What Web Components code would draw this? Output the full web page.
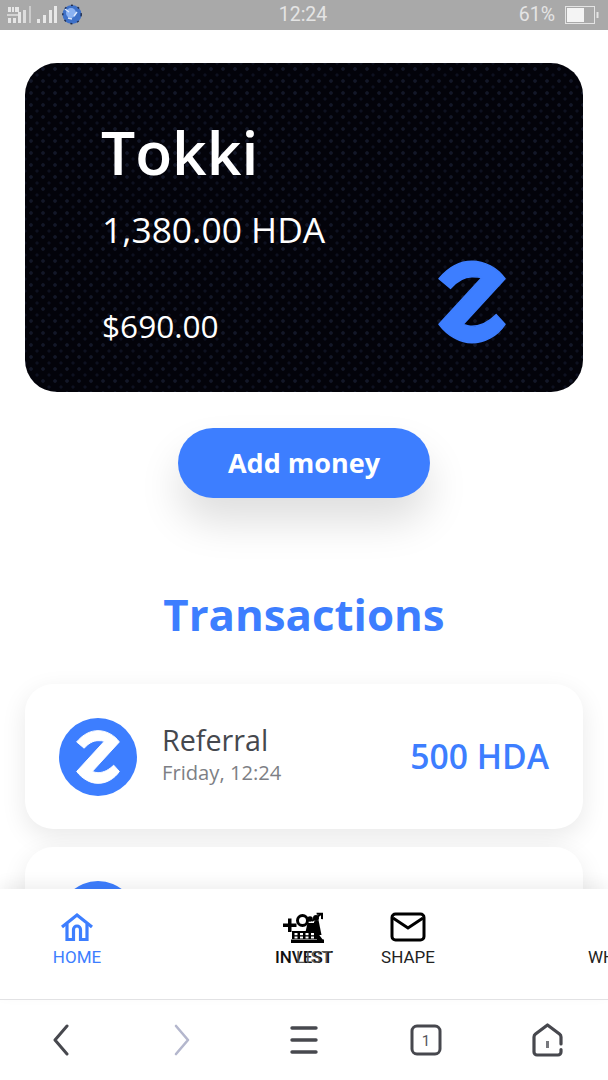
<!DOCTYPE html>
<html><head><meta charset="utf-8"><title>Tokki</title>
<style>
html,body{margin:0;padding:0;background:#fff}
body{width:608px;height:1080px;display:flex;flex-direction:column;overflow:hidden;font-family:"Open Sans",sans-serif}
main-view{flex:1;min-height:0}
</style></head><body>
<status-bar></status-bar>
<main-view>
  <balance-card name="Tokki" amount="1,380.00 HDA" fiat="$690.00"></balance-card>
  <pill-button>Add money</pill-button>
  <section-title>Transactions</section-title>
  <tx-row title="Referral" when="Friday, 12:24" amount="500 HDA"></tx-row>
  <tx-row></tx-row>
</main-view>
<tab-bar></tab-bar>
<browser-bar></browser-bar>
<script>
const Z='M0 18C10 6 22 0 34 0C47 0 60 7 68 18L25 65C28 66 31 67 34 67C43 67 52 62 59 55L68 65C60 77 47 84 34 84C22 84 9 77 0 65L44 17C41 16 38 16 34 16C26 16 18 21 12 28Z';
function def(name,css,html){
  customElements.define(name,class extends HTMLElement{
    connectedCallback(){
      if(this.shadowRoot)return;
      const r=this.attachShadow({mode:'open'});
      const a=k=>this.getAttribute(k)||'';
      r.innerHTML='<style>'+css+'</style>'+(typeof html==='function'?html(a):html);
    }
  });
}
def('z-logo',':host{display:block;line-height:0;color:inherit}svg{display:block;width:100%;height:100%}',
  `<svg viewBox="-1 -1 70 86"><path fill="currentColor" stroke="currentColor" stroke-width="1.5" stroke-linejoin="round" d="${Z}"/></svg>`);

def('status-bar',`:host{display:flex;align-items:center;height:30px;background:#a9a9a9;color:#e4e4e4;font:19.5px/30px Roboto,sans-serif;box-sizing:border-box;padding:0 9px 0 7px;flex:none}
  .l{flex:1;display:flex;align-items:center}.t{flex:none}.r{flex:1;display:flex;justify-content:flex-end;align-items:center;gap:10px}`,
`<div class="l"><svg width="76" height="22" viewBox="0 0 76 22">
  <g fill="#e6e6e6"><rect x="1" y="3" width="3" height="5"/><rect x="5" y="3" width="2" height="5"/><rect x="8" y="3" width="4" height="5"/>
  <rect x="0" y="10" width="11" height="2" opacity=".7"/><rect x="1" y="14" width="3" height="5"/><rect x="6" y="14" width="3" height="5"/><rect x="11" y="8" width="3" height="11" /><rect x="16" y="6" width="3" height="13" opacity=".85"/></g>
  <rect x="22" y="2" width="2" height="17" fill="#dcdcdc" opacity=".7"/>
  <g fill="#e8e8e8"><rect x="30" y="15" width="3" height="4"/><rect x="36" y="11" width="3" height="8"/><rect x="42" y="6" width="3" height="13"/><rect x="47" y="2" width="3" height="17"/></g>
  <circle cx="65" cy="10.5" r="9.5" fill="#3f71c8"/><circle cx="64" cy="9" r="5" fill="#8bb2f2"/><path d="M58 5l4 3M70 8l-3 4M61 14l4 1" stroke="#dce8fb" stroke-width="1.4" fill="none"/><circle cx="65" cy="10.5" r="9.2" fill="none" stroke="#1f2c4c" stroke-width="1.4" stroke-dasharray="2 5"/>
</svg></div>
<div class="t">12:24</div>
<div class="r"><span>61%</span><svg width="34" height="18" viewBox="0 0 34 18"><rect x=".5" y=".5" width="29" height="17" fill="none" stroke="#e4e4e4"/><rect x="2" y="2" width="17" height="14" fill="#f4f4f4"/><rect x="31.5" y="6" width="2" height="6" fill="#e4e4e4"/></svg></div>`);

def('main-view',`:host{display:block;overflow:hidden;padding:33px 25px 0;box-sizing:border-box}`,'<slot></slot>');

def('balance-card',`:host{display:flex;justify-content:space-between;height:329px;border-radius:32px;color:#fff;box-sizing:border-box;padding:53px 77px 48px;
  background-color:#03030a;background-image:radial-gradient(circle,#131728 0 1.4px,transparent 2.2px),radial-gradient(circle,#0e1120 0 1.2px,transparent 2px);background-size:12px 12px;background-position:0 0,6px 6px}
  .n{font-size:60.5px;font-weight:600;line-height:72px;margin-left:-1px}
  .a{font-size:35.4px;line-height:44px;margin-top:19px}
  .f{font-size:31.6px;line-height:44px;margin-top:53px}
  z-logo{align-self:flex-end;width:68px;height:84px;color:#3d7eff}`,
a=>`<div><div class="n">${a('name')}</div><div class="a">${a('amount')}</div><div class="f">${a('fiat')}</div></div><z-logo></z-logo>`);

def('pill-button',`:host{display:block;width:252px;height:70px;margin:36px auto 0;border-radius:35px;background:#3d7eff;color:#fff;font-size:27px;font-weight:700;line-height:70px;text-align:center;box-shadow:0 24px 40px rgba(0,0,0,.13)}`,'<slot></slot>');

def('section-title',`:host{display:block;text-align:center;color:#3d7eff;font-size:43.8px;font-weight:700;line-height:56px;margin-top:88px;margin-bottom:42px}`,'<slot></slot>');

def('tx-row',`:host{display:flex;align-items:center;height:145px;border-radius:28px;background:#fff;box-shadow:0 8px 26px rgba(0,0,0,.09);box-sizing:border-box;padding:0 34px;margin-bottom:18px}
  .c{width:78px;height:78px;border-radius:50%;background:#3d7eff;display:flex;align-items:center;justify-content:center;color:#fff;flex:none}
  z-logo{width:44px;height:54px}
  .m{flex:1;margin-left:26px;margin-bottom:3px}.t{font-size:28.7px;line-height:34px;color:#45484e;margin-left:-1px}.w{font-size:20.2px;line-height:30px;color:#7d7f85;margin-left:-1px}
  .v{font-size:33.7px;font-weight:600;color:#3d7eff;margin-top:-2px}`,
a=>`<div class="c"><z-logo></z-logo></div><div class="m">${a('title')?`<div class="t">${a('title')}</div><div class="w">${a('when')}</div>`:''}</div>${a('amount')?`<div class="v">${a('amount')}</div>`:''}`);

def('tab-item',`:host{display:flex;flex-direction:column;align-items:center;flex:none;width:104px;color:#222;font:17px/20px Roboto,sans-serif}
  :host([active]){color:#3d7eff}
  .i{height:30px;margin-top:23px;display:flex;align-items:center;justify-content:center}
  .l{margin-top:5px;white-space:nowrap}`,
a=>`<div class="i"><slot></slot></div><div class="l">${a('label')}</div>`);

def('tab-bar',`:host{display:flex;height:111px;background:#fff;flex:none;position:relative;box-shadow:0 -6px 14px rgba(0,0,0,.06);overflow:hidden;border-bottom:1px solid #e2e2e4;box-sizing:border-box}
  .home{margin-left:25px;margin-right:123px}
  .invest{position:relative}
  .ghost{position:absolute;right:24px;top:58px;font:17px/20px Roboto,sans-serif;color:#555;white-space:nowrap;letter-spacing:.5px}
  .last{margin-left:128px}`,
`<tab-item class="home" active label="HOME"><svg width="34" height="30" viewBox="0 0 34 30" fill="none" stroke="currentColor" stroke-width="3.2"><path d="M2 15 17 3 32 15"/><path d="M7 12V27.5H13.5V17.5a3.5 3.5 0 0 1 7 0V27.5H27V12"/></svg></tab-item>
<div class="invest"><tab-item label="INVEST" style="font-weight:500;color:#111"><svg width="42" height="31" viewBox="0 0 42 31" fill="#000">
 <path d="M0 11.500h5V6.500h3.500v5h5v3.500h-5v5H5v-5H0z"/>
 <circle cx="19.500" cy="8.500" r="5" fill="none" stroke="#000" stroke-width="3"/><circle cx="27" cy="7" r="2.800"/>
 <path d="M24.500 11l-2 9h12l1-9z"/><circle cx="33" cy="6" r="3"/><path d="M29 9 38 2" stroke="#000" stroke-width="2" fill="none"/><path d="M33.500 .8h6.500v6.500l-2-.3v-4.200h-4.200z"/>
 <path d="M31 9.500l4.500-1.500 3 15h-8z"/>
 <rect x="9" y="19" width="26" height="8"/><path d="M34 20l6 8h-6z"/><rect x="8" y="27.500" width="33" height="3.500"/>
 <g fill="#fff"><rect x="11.500" y="21" width="3" height="2.200"/><rect x="17" y="21" width="3" height="2.200"/><rect x="22.500" y="21" width="3" height="2.200"/><rect x="28" y="21" width="3" height="2.200"/><rect x="11.500" y="24.500" width="3" height="2"/><rect x="17" y="24.500" width="3" height="2"/><rect x="22.500" y="24.500" width="3" height="2"/><rect x="28" y="24.500" width="3" height="2"/></g></svg></tab-item>
 <div class="ghost">LIST</div></div>
<tab-item label="SHAPE"><svg width="36" height="30" viewBox="0 0 36 30" fill="none" stroke="#000" stroke-width="3"><rect x="2" y="2" width="32" height="26" rx="3.5"/><path d="M3 6 18 16 33 6"/></svg></tab-item>
<tab-item class="last" style="align-items:flex-start" label="WHEEL"><span></span></tab-item>`);

def('browser-bar',`:host{display:grid;grid-template-columns:repeat(5,1fr);height:80px;background:#fff;align-items:center;justify-items:center;flex:none}
  svg{display:block}`,
`<svg width="18" height="32" viewBox="0 0 18 32" fill="none" stroke="#47484e" stroke-width="3" stroke-linecap="round" stroke-linejoin="round"><path d="M15 2 3 16 15 30"/></svg>
<svg width="18" height="32" viewBox="0 0 18 32" fill="none" stroke="#b4b7cd" stroke-width="2.6" stroke-linecap="round" stroke-linejoin="round"><path d="M3 2 15 16 3 30"/></svg>
<svg width="28" height="30" viewBox="0 0 28 30" fill="none" stroke="#47484e" stroke-width="3.4" stroke-linecap="round"><path d="M2 3H26M2 15H26M2 27H26"/></svg>
<svg width="32" height="32" viewBox="0 0 32 32"><rect x="2" y="2" width="28" height="28" rx="5" fill="none" stroke="#47484e" stroke-width="3"/><text x="16" y="22" text-anchor="middle" font-family="Roboto" font-size="15" fill="#55565c">1</text></svg>
<svg width="32" height="34" viewBox="0 0 32 34" fill="none" stroke="#47484e" stroke-width="3.200" stroke-linecap="round" stroke-linejoin="round"><path d="M30 26.500V29a3 3 0 0 1-3 3H6a3 3 0 0 1-3-3V14a4 4 0 0 1 1.500-3L16.500 2 28.500 11A4 4 0 0 1 30 14V21"/><path d="M16.500 18V25" stroke-width="3" stroke-linecap="butt" stroke="#77787d"/></svg>`);
</script>
</body></html>
